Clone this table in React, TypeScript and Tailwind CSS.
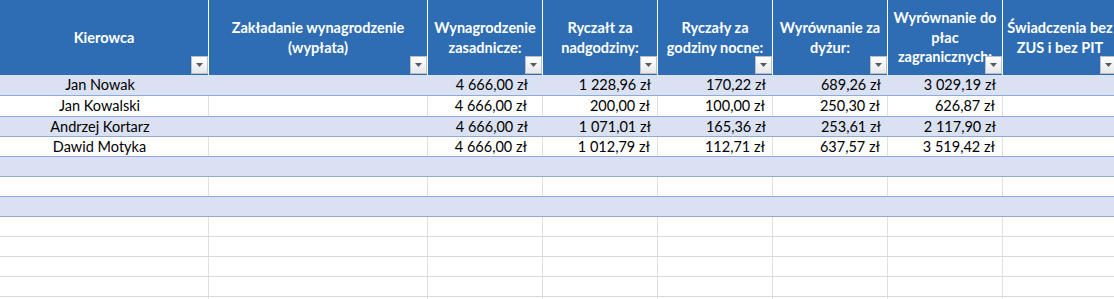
import React from 'react';

const headers = [
    ['Kierowca'],
    ['Zakładanie wynagrodzenie', '(wypłata)'],
    ['Wynagrodzenie', 'zasadnicze:'],
    ['Ryczałt za', 'nadgodziny:'],
    ['Ryczały za', 'godziny nocne:'],
    ['Wyrównanie za', 'dyżur:'],
    ['Wyrównanie do', 'płac', 'zagranicznych:'],
    ['Świadczenia bez', 'ZUS i bez PIT'],
];

const rows = [
    ['Jan Nowak', '', '4 666,00 zł', '1 228,96 zł', '170,22 zł', '689,26 zł', '3 029,19 zł', ''],
    ['Jan Kowalski', '', '4 666,00 zł', '200,00 zł', '100,00 zł', '250,30 zł', '626,87 zł', ''],
    ['Andrzej Kortarz', '', '4 666,00 zł', '1 071,01 zł', '165,36 zł', '253,61 zł', '2 117,90 zł', ''],
    ['Dawid Motyka', '', '4 666,00 zł', '1 012,79 zł', '112,71 zł', '637,57 zł', '3 519,42 zł', ''],
    ['', '', '', '', '', '', '', ''],
    ['', '', '', '', '', '', '', ''],
    ['', '', '', '', '', '', '', ''],
];

const gridCols = 'grid grid-cols-[209px_219px_115px_115px_115px_115px_115px_115px]';

function FilterButton() {
    return (
        <div className="absolute right-0 bottom-px w-[17px] h-[18px] border border-[#b9bfc7] bg-gradient-to-b from-white to-[#e6e8eb] flex items-center justify-center">
            <svg width="7" height="4" viewBox="0 0 7 4">
                <path d="M0 0 L7 0 L3.5 4 Z" fill="#5a5a5a" />
            </svg>
        </div>
    );
}

export default function App() {
    return (
        <div className="w-[1114px] h-[299px] overflow-hidden bg-white" style={{ fontFamily: 'Lato, "Liberation Sans", sans-serif' }}>
            <div className="w-[1118px]">
                {/* header */}
                <div className={`${gridCols} h-[75px] bg-[#2e6db4]`}>
                    {headers.map((lines, i) => (
                        <div key={i} className="relative border-r border-white flex flex-col items-center justify-center text-white font-bold text-[14.5px] leading-[19.5px] text-center whitespace-nowrap overflow-hidden">
                            {lines.map((l, j) => (
                                <span key={j}>{l}</span>
                            ))}
                            <FilterButton />
                        </div>
                    ))}
                </div>

                {/* table body */}
                {rows.map((r, ri) => {
                    const banded = ri % 2 === 0;
                    const h = ri < 2 ? 'h-[21px]' : 'h-[20px]';
                    return (
                        <div key={ri} className={`${gridCols} ${h} border-b border-[#8ea9db] ${banded ? 'bg-[#d9e1f2]' : 'bg-white'}`}>
                            {r.map((v, ci) => (
                                <div
                                    key={ci}
                                    className={`flex items-center text-[14.5px] text-black whitespace-nowrap overflow-hidden ${banded ? '' : 'border-r border-[#e1e1e1]'} ${ci === 0 ? 'justify-center pr-[9px]' : ci === 2 ? 'justify-end pr-[15px]' : 'justify-end pr-[7px]'}`}
                                >
                                    {v}
                                </div>
                            ))}
                        </div>
                    );
                })}

                {/* empty sheet grid */}
                {Array.from({ length: 5 }).map((_, ri) => (
                    <div key={ri} className={`${gridCols} h-[20px] border-b border-[#dadada]`}>
                        {Array.from({ length: 8 }).map((_, ci) => (
                            <div key={ci} className="border-r border-[#e1e1e1]" />
                        ))}
                    </div>
                ))}
            </div>
        </div>
    );
}
